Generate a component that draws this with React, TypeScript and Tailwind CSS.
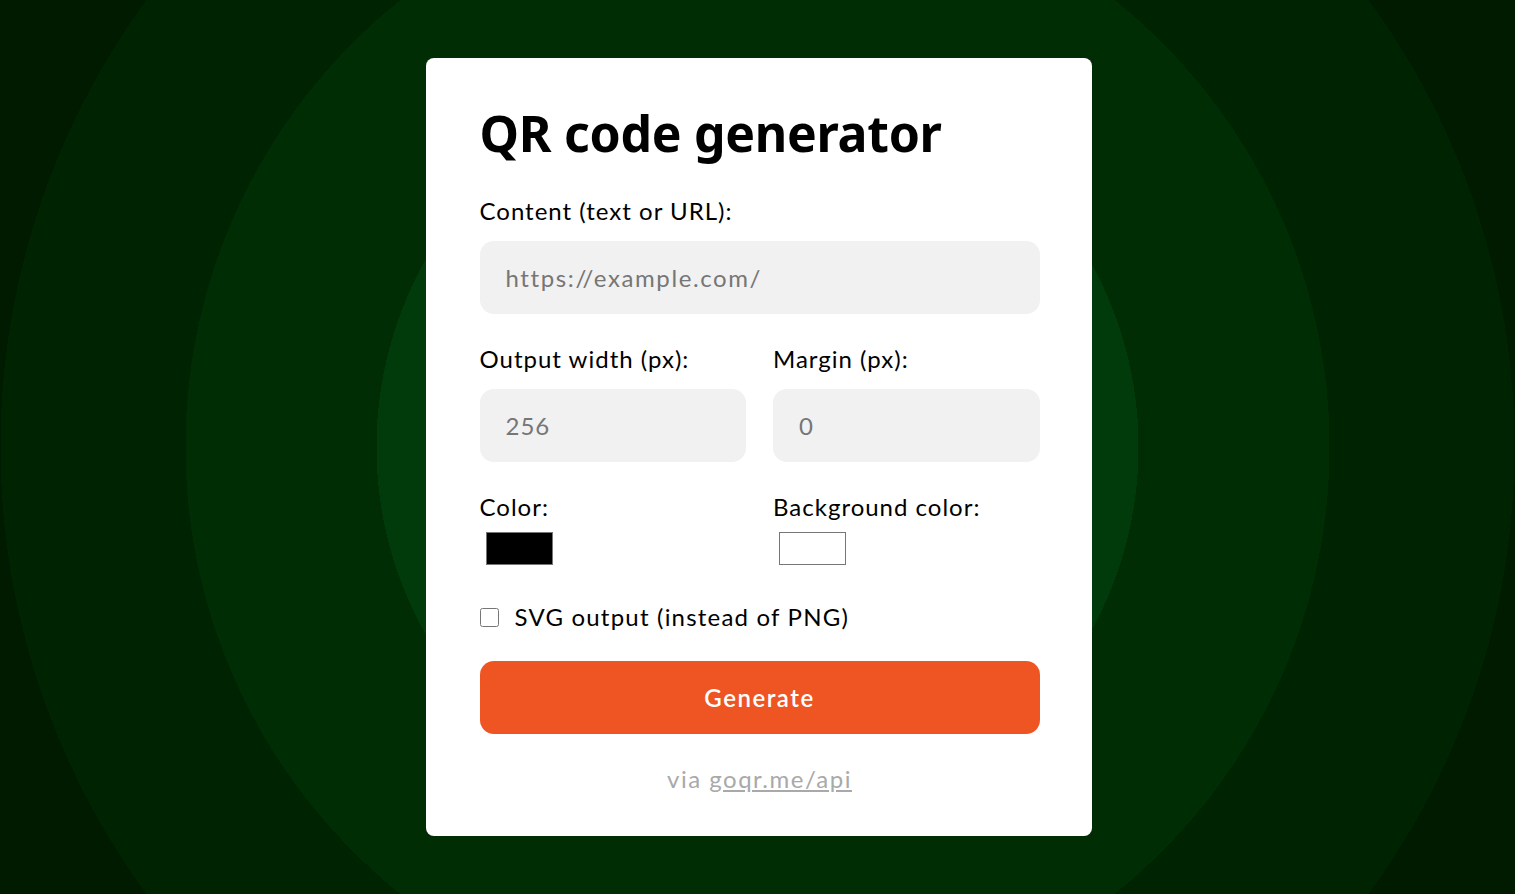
import { useState } from 'react';

const App = () => {
  const [content, setContent] = useState('');
  const [width, setWidth] = useState('');
  const [margin, setMargin] = useState('');
  const [svg, setSvg] = useState(false);

  return (
    <div className="min-h-screen w-full flex items-start justify-center bg-[radial-gradient(circle_at_50%_50%,#013a0b_0px,#013a0b_381px,#002d03_381px,#002d03_572px,#002301_572px,#002301_757px,#001b00_757px)] font-['Lato','Noto_Sans',sans-serif] tracking-[1px]">
      <div className="mt-[58px] ml-[2px] w-[666px] bg-white rounded-[8px] pl-[54px] pr-[52px] pt-[45px] pb-[42px] flex flex-col text-black">
        <h1 className="font-['Noto_Sans',sans-serif] font-bold text-[50px] leading-[60px] tracking-[-0.3px]">
          QR code generator
        </h1>

        <label className="mt-[33px] text-[24px] leading-[30px]">Content (text or URL):</label>
        <input
          value={content}
          onChange={(e) => setContent(e.target.value)}
          placeholder="https://example.com/"
          className="mt-[15px] h-[73px] w-full rounded-[14px] bg-[#f1f1f1] px-[26px] text-[24px] tracking-[1.6px] outline-none placeholder:text-[#767676]"
        />

        <div className="mt-[30px] grid grid-cols-2 gap-x-[27px]">
          <div className="flex flex-col">
            <label className="text-[24px] leading-[30px]">Output width (px):</label>
            <input
              value={width}
              onChange={(e) => setWidth(e.target.value)}
              placeholder="256"
              className="mt-[15px] h-[73px] w-full rounded-[14px] bg-[#f1f1f1] px-[26px] text-[24px] outline-none placeholder:text-[#767676]"
            />
          </div>
          <div className="flex flex-col">
            <label className="text-[24px] leading-[30px]">Margin (px):</label>
            <input
              value={margin}
              onChange={(e) => setMargin(e.target.value)}
              placeholder="0"
              className="mt-[15px] h-[73px] w-full rounded-[14px] bg-[#f1f1f1] px-[26px] text-[24px] outline-none placeholder:text-[#767676]"
            />
          </div>
        </div>

        <div className="mt-[30px] grid grid-cols-2 gap-x-[27px]">
          <div className="flex flex-col">
            <label className="text-[24px] leading-[30px]">Color:</label>
            <div className="mt-[10px] ml-[6px] w-[67px] h-[33px] bg-black border border-[#767676]" />
          </div>
          <div className="flex flex-col">
            <label className="text-[24px] leading-[30px]">Background color:</label>
            <div className="mt-[10px] ml-[6px] w-[67px] h-[33px] bg-white border border-[#767676]" />
          </div>
        </div>

        <label className="mt-[37px] flex items-center h-[30px] text-[24px] cursor-pointer">
          <input
            type="checkbox"
            checked={svg}
            onChange={(e) => setSvg(e.target.checked)}
            className="w-[19px] h-[19px] m-0 accent-[#ef5423]"
          />
          <span className="ml-[16px] tracking-[1.2px]">SVG output (instead of PNG)</span>
        </label>

        <button className="mt-[29px] h-[73px] w-full rounded-[14px] bg-[#ef5523] text-white text-[24px] font-semibold tracking-[1.5px]">
          Generate
        </button>

        <p className="mt-[30px] text-center text-[24px] leading-[30px] text-[#a9a9a9] tracking-[1.5px]">
          via <a href="#" className="underline">goqr.me/api</a>
        </p>
      </div>
    </div>
  );
};

export default App;
